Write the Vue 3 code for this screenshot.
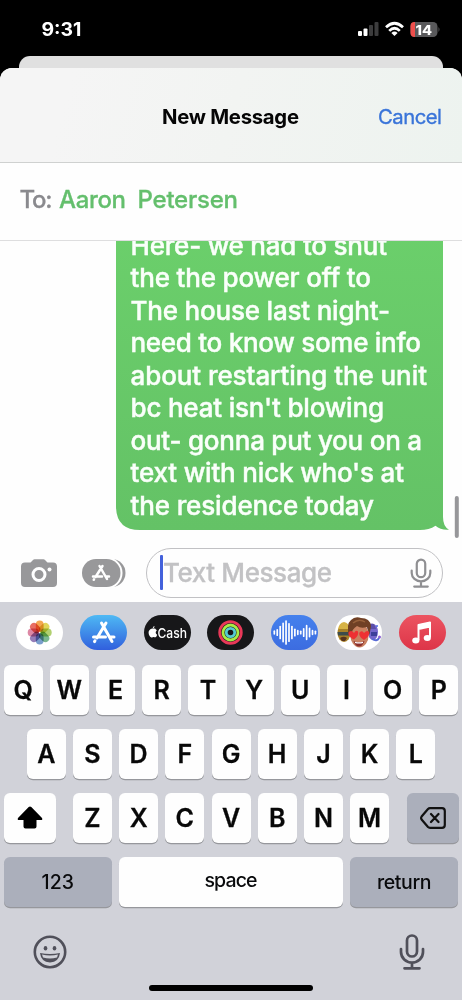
<script setup>
const lines = [
  { text: 'Here- we had to shut', w: 256 },
  { text: 'the the power off to', w: 240 },
  { text: 'The house last night-', w: 259 },
  { text: 'need to know some info', w: 290 },
  { text: 'about restarting the unit', w: 296 },
  { text: "bc heat isn't blowing", w: 253 },
  { text: 'out- gonna put you on a', w: 291 },
  { text: "text with nick who's at", w: 273 },
  { text: 'the residence today', w: 243 },
]
const petals = [
  ['#f29a38', 0], ['#ddd044', 45], ['#a5c95a', 90], ['#66ae80', 135],
  ['#668fc5', 180], ['#8569ae', 225], ['#d87698', 270], ['#e5584b', 315],
]
const wave = [[4, 3], [8, 6], [12, 13], [16, 20], [20, 25], [24, 19], [28, 13], [32, 7], [36, 4], [40, 2.5], [44, 8], [48, 15], [52, 9], [56, 4], [60, 2.5]]
</script>

<template>
  <main class="phone">
    <header class="status">
      <svg width="462" height="56" viewBox="0 0 462 56">
        <text x="41.5" y="36.200" class="time" textLength="40" lengthAdjust="spacingAndGlyphs">9:31</text>
        <g fill="#fff">
          <rect x="358" y="31" width="4" height="5" rx="1" />
          <rect x="363.5" y="28.5" width="4" height="7.5" rx="1" />
          <rect x="369" y="25" width="4" height="11" rx="1" fill="#3c3c3d" />
          <rect x="374.5" y="22" width="4" height="14" rx="1" fill="#3c3c3d" />
        </g>
        <g fill="none" stroke="#fff" stroke-width="2.7">
          <path d="M386 27.3Q394.5 19.2 403 27.3" />
          <path d="M389.2 30.9Q394.5 25.7 399.8 30.9" />
        </g>
        <path d="M391.4 33Q394.5 30.2 397.6 33L394.5 36Z" fill="#fff" />
        <rect x="410.5" y="22" width="27" height="15" rx="4.5" fill="#59595b" />
        <path d="M415 22h-.5a4 4 0 0 0-4 4v7a4 4 0 0 0 4 4h.5Z" fill="#ee4f4c" />
        <path d="M438.5 27q2 2.5 0 5Z" fill="#59595b" />
        <text x="415.5" y="34.5" class="pct" textLength="16.5" lengthAdjust="spacingAndGlyphs">14</text>
      </svg>
    </header>
    <div class="behind"></div>
    <section class="sheet">
      <div class="nav">
        <svg width="462" height="94">
          <text x="162" y="56" class="title" textLength="137">New Message</text>
          <text x="378" y="56" class="cancel" textLength="64">Cancel</text>
        </svg>
      </div>
      <div class="to">
        <svg width="462" height="77">
          <text x="19.500" y="45" class="to-label" textLength="33">To:</text>
          <text x="59" y="45" class="to-name" textLength="67">Aaron</text>
          <text x="137.5" y="45" class="to-name" textLength="100.5">Petersen</text>
        </svg>
      </div>
      <div class="chat">
        <svg width="462" height="305" viewBox="0 241 462 305">
          <defs>
            <linearGradient id="bubble" x1="0" y1="0" x2="0" y2="1">
              <stop offset="0" stop-color="#6bcf6b" /><stop offset="1" stop-color="#64c266" />
            </linearGradient>
          </defs>
          <path d="M116 230H443V517Q443 526.500 449 529.700Q441 530.500 435.500 525.700Q429 530 420 530H140Q116 530 116 506Z" fill="url(#bubble)" />
          <text v-for="(l, i) in lines" :key="i" x="130.500" :y="254.7 + i * 32.5" class="msg" :textLength="l.w + 0.5">{{ l.text }}</text>
          <rect x="454.800" y="496" width="4" height="42" rx="2" fill="#97979a" />
        </svg>
      </div>
      <div class="compose">
        <svg class="camera" width="36" height="28" viewBox="0 0 36 28">
          <path d="M4 3.500H9.500L12 1Q12.600.3 13.500.3H22.500Q23.400.3 24 1L26.500 3.500H32Q36 3.500 36 7.500V24Q36 28 32 28H4Q0 28 0 24V7.500Q0 3.500 4 3.500Z" fill="#98989a" />
          <circle cx="18" cy="15.500" r="6" fill="none" stroke="#fff" stroke-width="3" />
          <circle cx="28.500" cy="10.500" r="2" fill="#fff" />
        </svg>
        <svg class="store" width="44" height="28" viewBox="0 0 44 28">
          <path d="M29.500 0a14 14 0 0 1 0 28Z" fill="#98989a" />
          <rect x="-2" y="-2" width="42.500" height="32" rx="16" fill="#fff" />
          <rect width="38.500" height="28" rx="14" fill="#98989a" />
          <g fill="none" stroke="#fff" stroke-width="2.500" stroke-linecap="round">
            <path d="M20.500 7L13.500 18M17.500 7L25 20M11 17.500H20M24 17.500H27M12 20.300L11.700 20.800" />
          </g>
        </svg>
        <div class="field">
          <i class="caret"></i>
          <svg class="placeholder" width="172" height="40"><text x="0" y="29" textLength="169">Text Message</text></svg>
          <svg class="field-mic" width="22" height="30" viewBox="0 0 26 36" preserveAspectRatio="none">
            <g fill="none" stroke="#8f8f92" stroke-width="2.600" stroke-linecap="round">
              <rect x="8" y="2" width="10" height="21" rx="5" /><path d="M2 15v3a11 10 0 0 0 22 0v-3M13 28v6M5 34.300h16" />
            </g>
          </svg>
        </div>
      </div>
    </section>
    <section class="keyboard">
      <div class="apps">
        <div class="pill">
          <svg viewBox="0 0 47 35">
            <g class="petals"><rect v-for="p in petals" :key="p[1]" x="19.800" y="5.500" width="7.800" height="11.300" rx="3.900" :fill="p[0]" opacity=".87" :transform="`rotate(${p[1]} 23.7 17.5)`" /></g>
          </svg>
        </div>
        <div class="pill blue">
          <svg viewBox="0 0 47 35">
            <path d="M26 8L17 23M21.500 8L32 26.500M13.500 22H25.500M30 22H34M15 25.800L14.500 26.600" fill="none" stroke="#fff" stroke-width="3" stroke-linecap="round" />
          </svg>
        </div>
        <div class="pill dark">
          <svg viewBox="0 0 47 35">
            <path d="M11.700 14.300C11.600 13.500 10.800 13.700 10 13.500C8 13 4.600 14.200 4.600 17.700C4.600 20 6.400 22.500 7.700 22.500C8.500 22.500 8.900 22 9.500 22C10.400 22 10.600 22.500 11.400 22.300C12.400 22 12.900 20.600 13.100 19.700C11.400 18.900 11.200 16.500 12.800 15.500C12.300 14.600 11.900 14.500 11.700 14.300Z" fill="#fff" />
            <path d="M8.700 13.400Q8.700 11.500 10.600 11Q10.700 13 8.700 13.400Z" fill="#fff" />
            <text x="13.500" y="22.500" class="cash" textLength="29.500" lengthAdjust="spacingAndGlyphs">Cash</text>
          </svg>
        </div>
        <div class="pill dark">
          <svg viewBox="0 0 47 35" fill="none">
            <circle cx="23.500" cy="17.500" r="10.800" stroke="#e93858" stroke-width="2.800" />
            <circle cx="23.500" cy="17.500" r="7.500" stroke="#a8eb45" stroke-width="2.800" />
            <circle cx="23.500" cy="17.500" r="4.200" stroke="#55cbd0" stroke-width="2.800" />
          </svg>
        </div>
        <div class="pill audio">
          <svg viewBox="0 0 64 47"><path v-for="v in wave" :key="v[0]" :d="`M${v[0] + 0.5} ${23.500 - v[1] * .62}V${23.500 + v[1] * .62}`" stroke="#fff" stroke-width="2.300" stroke-linecap="round" /></svg>
        </div>
        <div class="pill">
          <svg viewBox="0 0 47 35">
            <ellipse cx="9" cy="18" rx="6.500" ry="9" fill="#a88127" />
            <path d="M3 14Q4 8 9 7Q14 8 15 14Z" fill="#d7b346" />
            <path d="M2.500 17H14V20.500H3Z" fill="#3d4c4b" /><path d="M5 23Q9 20.500 12 23L10 26H7Z" fill="#58331e" />
            <ellipse cx="38" cy="17" rx="5" ry="8" fill="#7567cc" />
            <path d="M32 13Q35 7 39 9L41 14H33Z" fill="#5b4ea9" />
            <path d="M36 17h6v4h-6Z" fill="#3c3f9a" /><circle cx="42" cy="11" r="1" fill="#4c6ce0" /><circle cx="44.500" cy="22" r="1.500" fill="#8e60d5" />
            <path d="M37 24q5 3 7-1" fill="none" stroke="#5769d6" stroke-width="2" />
            <ellipse cx="24.500" cy="20" rx="9.200" ry="12.500" fill="#c98261" />
            <path d="M14 21Q11 9 16 5Q20 1 26 3Q35 3 36 11L34.500 20L32 12Q26 14 22 11Q17 14 16 20Z" fill="#704025" />
            <path d="M18 8Q24 3 30 7" fill="none" stroke="#98613b" stroke-width="1.500" />
            <path d="M18.500 26Q24 28.500 29.500 26Q27.500 31.500 24 31.500T18.500 26Z" fill="#8b302d" /><path d="M20 26.700q4 1.300 8 0v1.300q-4 1.200-8 0Z" fill="#fff" />
            <path d="M19 24.500C13 22 12.500 17.500 14.500 16.500Q17 15 19 18Q21 14.500 23 16.500C24 20 21 23 19 24.500ZM29 25C24 22 23.500 18 25 17Q27.500 15 29 18Q32 14.500 34 17C35 20 32 23 29 25Z" fill="#ee3033" />
          </svg>
        </div>
        <div class="pill red">
          <svg viewBox="0 0 47 35">
            <path d="M19.500 25V10L31 7.500V22.500M19.500 14L31 11.500" fill="none" stroke="#fff" stroke-width="2" stroke-linejoin="round" /><path d="M19.500 9.500L31 7.200V11.500L19.500 14Z" fill="#fff" />
            <ellipse cx="16.800" cy="25.500" rx="3.600" ry="3" fill="#fff" /><ellipse cx="28.300" cy="23" rx="3.600" ry="3" fill="#fff" />
          </svg>
        </div>
      </div>
      <div class="row"><button v-for="k in 'QWERTYUIOP'" :key="k" class="key">{{ k }}</button></div>
      <div class="row"><button v-for="k in 'ASDFGHJKL'" :key="k" class="key">{{ k }}</button></div>
      <div class="row edges">
        <button class="key side"><svg width="26" height="23" viewBox="0 0 26 23"><path d="M11.700 1Q13 0 14.300 1L25 12Q26 14 24 14H19.500V20.500Q19.500 22.500 17.500 22.500H8.500Q6.500 22.500 6.500 20.500V14H2Q0 14 1 12Z" /></svg></button>
        <div class="letters"><button v-for="k in 'ZXCVBNM'" :key="k" class="key">{{ k }}</button></div>
        <button class="key side gray"><svg width="26" height="22" viewBox="0 0 26 22"><path d="M10 1.200H22Q24.800 1.200 24.800 4V18Q24.800 20.800 22 20.800H10Q8.800 20.800 8 20L1.600 12.500Q.6 11 1.600 9.500L8 2Q8.800 1.200 10 1.200ZM11 7L18.500 15M18.500 7L11 15" fill="none" stroke="#111" stroke-width="2.200" stroke-linecap="round" stroke-linejoin="round" /></svg></button>
      </div>
      <div class="row bottom">
        <button class="key word gray"><svg width="108" height="50"><text x="37.500" y="31.500" textLength="32.500">123</text></svg></button>
        <button class="key word space"><svg width="224" height="50"><text x="85.500" y="30" textLength="53">space</text></svg></button>
        <button class="key word gray"><svg width="108" height="50"><text x="27" y="31.500" textLength="54.500">return</text></svg></button>
      </div>
      <footer class="dock">
        <svg width="34" height="34" viewBox="0 0 34 34">
          <circle cx="17" cy="17" r="15.200" fill="none" stroke="#50505a" stroke-width="2.600" />
          <ellipse cx="12.500" cy="13.200" rx="1.800" ry="2.300" fill="#50505a" /><ellipse cx="21.500" cy="13.200" rx="1.800" ry="2.300" fill="#50505a" />
          <path d="M7 18Q17 20 27 18Q26 27 17 27.500Q8 27 7 18Z" fill="#50505a" />
          <path d="M9 19.600Q17 21.300 25 19.600L24 22.500Q17 24.500 10 22.500Z" fill="#d1d2d9" />
        </svg>
        <svg width="26" height="36" viewBox="0 0 26 36">
          <g fill="none" stroke="#50505a" stroke-width="2.700" stroke-linecap="round">
            <rect x="8" y="1.500" width="10" height="21" rx="5" /><path d="M2 15v3a11 10.500 0 0 0 22 0v-3M13 28.500v6M5.500 34.300h15" />
          </g>
        </svg>
      </footer>
      <div class="home"></div>
    </section>
  </main>
</template>

<style>
body { margin: 0; background: #000; }
</style>
<style scoped>
* { box-sizing: border-box; }
.phone { width: 462px; height: 1000px; background: #000; overflow: hidden; font-family: Inter, "Liberation Sans", sans-serif; }
svg { display: block; flex: none; }
.status { height: 56px; }
.time { font-size: 18.500px; font-weight: 650; fill: #fff; }
.pct { font-size: 13.500px; font-weight: 800; fill: #fff; }
.behind { height: 12px; margin: 0 19px; background: #e0e0e0; border-radius: 11px 11px 0 0; }
.sheet { height: 534px; background: #fefefe; border-radius: 12px 12px 0 0; overflow: hidden; }
.nav { height: 95px; background: linear-gradient(105deg, #f5f5f5 15%, #f2f4f2 50%, #edf3ef); border-bottom: 1px solid #cfd1d0; }
.title { font-size: 20.300px; font-weight: 700; fill: #050505; }
.cancel { font-size: 20.300px; fill: #3974d9; stroke: #3974d9; stroke-width: .35px; }
.to { height: 78px; border-bottom: 1px solid #dededf; }
.to-label, .to-name { font-size: 24px; font-weight: 500; stroke-width: .3px; }
.to-label { fill: #8a8a8e; stroke: #8a8a8e; }
.to-name { fill: #64bf6d; stroke: #64bf6d; }
.chat { height: 305px; }
.msg { font-size: 26px; font-weight: 500; fill: #fafffa; stroke: #fafffa; stroke-width: .45px; }
.compose { height: 56px; display: flex; align-items: center; padding: 0 19px 3px 21px; }
.store { margin-left: 25px; }
.field { margin-left: auto; width: 297px; height: 50px; border: 1.500px solid #c1c1c4; border-radius: 25px; display: flex; align-items: center; padding: 0 10px 0 13px; }
.caret { width: 2.500px; height: 35px; background: #4361db; border-radius: 1px; }
.placeholder { font-size: 26px; font-weight: 500; fill: #c2c2c4; stroke: #c2c2c4; stroke-width: .3px; }
.field-mic { margin-left: auto; }
.keyboard { height: 398px; background: #d1d2d9; padding-top: 13px; }
.apps { display: flex; justify-content: space-between; padding: 0 16px; height: 49.500px; }
.pill { width: 47px; height: 35px; border-radius: 18px; background: #fff; overflow: hidden; }
.pill svg { width: 47px; height: 35px; }
.petals rect { mix-blend-mode: multiply; }
.blue { background: linear-gradient(#4eb9f4, #315fdd); }
.dark { background: #171719; }
.cash { font-size: 13.500px; font-weight: 500; fill: #fff; }
.audio { background: linear-gradient(#4581ed, #3c6ce0); }
.red { background: linear-gradient(#ec5461, #dd3548); }
.row { display: flex; justify-content: center; gap: 7.200px; height: 50px; margin-bottom: 14px; }
.key { width: 39px; height: 50px; padding: 0; border: 0; border-radius: 6px; background: #fefefe; box-shadow: 0 1.300px 0 #96979c; color: #080808; font: 600 25px/52px Inter, "Liberation Sans", sans-serif; -webkit-text-stroke: .3px #080808; display: flex; align-items: center; justify-content: center; flex: none; }
.edges { justify-content: space-between; padding: 0 3.500px; }
.letters { display: flex; gap: 7.200px; }
.side { width: 52px; }
.gray { background: #abafbb; }
.bottom { margin-bottom: 0; }
.word { width: 108px; }
.word text { font-size: 19.500px; font-weight: 500; fill: #090a0c; }
.space { width: 224px; }
.dock { display: flex; justify-content: space-between; align-items: center; padding: 0 37px 0 33px; height: 80px; padding-top: 11px; }
.home { width: 164px; height: 6px; background: #000; border-radius: 3px; margin: -2px 0 0 149px; }
</style>
